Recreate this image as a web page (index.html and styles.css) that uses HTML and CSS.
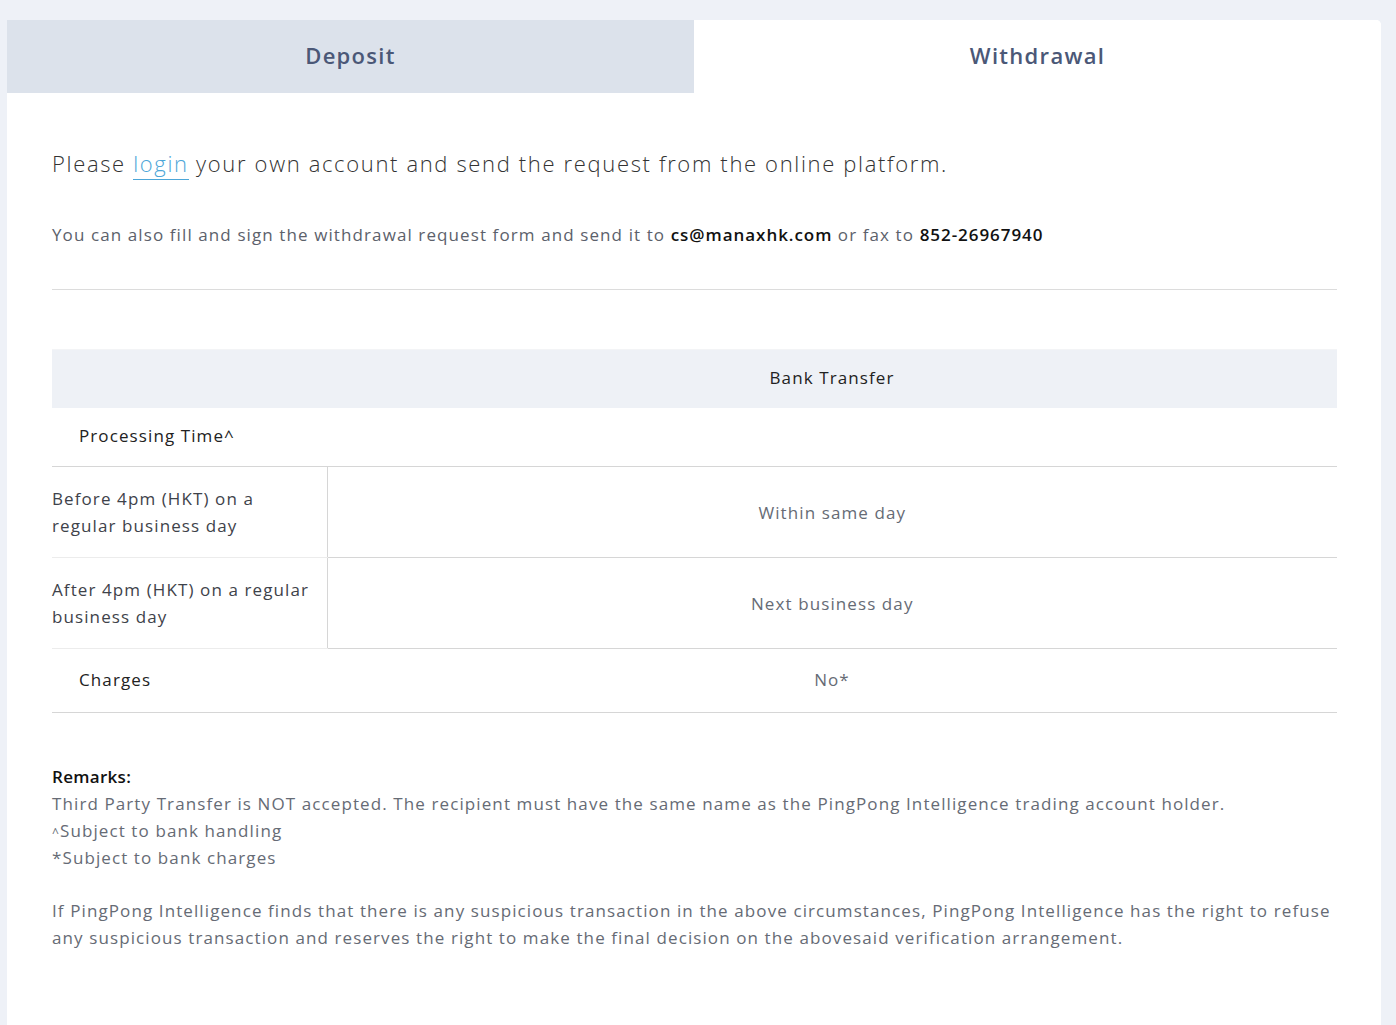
FILE: index.html
```html
<!DOCTYPE html>
<html lang="en">
<head>
    <meta charset="UTF-8">
    <meta name="viewport" content="width=device-width, initial-scale=1.0">
    <title>Withdrawal</title>
    <link rel="stylesheet" href="styles.css">
</head>
<body>

    <div class="panel">
        <div class="tabs">
            <div class="tab">Deposit</div>
            <div class="tab active">Withdrawal</div>
        </div>

        <div class="content">
            <h2 class="lead">Please <a href="#">login</a> your own account and send the request from the online platform.</h2>
            <p class="note">You can also fill and sign the withdrawal request form and send it to <b>cs@manaxhk.com</b> or fax to <b>852-26967940</b></p>

            <hr class="divider">

            <table class="methods">
                <thead>
                    <tr>
                        <th class="blank"></th>
                        <th>Bank Transfer</th>
                    </tr>
                </thead>
                <tbody>
                    <tr class="group">
                        <td class="label" colspan="2">Processing Time^</td>
                    </tr>
                    <tr class="sub">
                        <td class="when">Before 4pm (HKT) on a regular business day</td>
                        <td class="value">Within same day</td>
                    </tr>
                    <tr class="sub">
                        <td class="when">After 4pm (HKT) on a regular business day</td>
                        <td class="value">Next business day</td>
                    </tr>
                    <tr class="group charges">
                        <td class="label">Charges</td>
                        <td class="value">No*</td>
                    </tr>
                </tbody>
            </table>

            <div class="remarks">
                <h4>Remarks:</h4>
                <p>Third Party Transfer is NOT accepted. The recipient must have the same name as the PingPong Intelligence trading account holder.</p>
                <p><span class="caret">^</span>Subject to bank handling</p>
                <p>*Subject to bank charges</p>
            </div>

            <p class="disclaimer">If PingPong Intelligence finds that there is any suspicious transaction in the above circumstances, PingPong Intelligence has the right to refuse any suspicious transaction and reserves the right to make the final decision on the abovesaid verification arrangement.</p>
        </div>
    </div>

</body>
</html>
```

FILE: styles.css
```css
body {
    font-family: 'Open Sans', sans-serif;
    background-color: #eef1f7;
    color: #333;
    margin: 0;
    padding: 20px 15px 0 7px;
    letter-spacing: 1.1px;
}

.panel {
    background: white;
    border-radius: 0 5px 0 0;
    min-height: 1010px;
}

.tabs {
    display: grid;
    grid-template-columns: 687px 1fr;
    height: 73px;
}

.tab {
    display: flex;
    align-items: center;
    justify-content: center;
    padding-bottom: 4px;
    font-size: 22px;
    font-weight: 600;
    letter-spacing: 1.3px;
    color: #4b5877;
    background-color: #dce2eb;
}

.tab.active {
    background-color: white;
    border-radius: 0 5px 0 0;
}

.content {
    padding: 55px 44px 40px 45px;
}

.lead {
    margin: 0;
    font-size: 22px;
    font-weight: 300;
    line-height: 30px;
    letter-spacing: 1.65px;
    color: #333;
}

.lead a {
    color: #4ca6d8;
    text-decoration: none;
    border-bottom: 1px solid #4ca6d8;
    padding-bottom: 1px;
}

.note {
    margin: 43px 0 0;
    font-size: 17px;
    line-height: 27px;
    color: #5c616b;
}

.note b {
    color: #111;
    font-weight: 600;
    letter-spacing: 0.95px;
}

.divider {
    border: 0;
    border-top: 1px solid #dcdcdc;
    margin: 41px 0 0;
}

table.methods {
    width: 100%;
    border-collapse: collapse;
    margin-top: 59px;
    font-size: 17px;
}

.methods th {
    height: 54px;
    padding: 0 0 4px;
    background-color: #eef1f6;
    font-weight: 500;
    color: #222;
    text-align: center;
    border-top: 1px solid #f3f4f6;
}

.methods th.blank {
    width: 275px;
}

.methods td {
    padding: 0;
    border-bottom: 1px solid #d6d6d6;
}

.methods tr.group td {
    height: 55px;
}

.methods td.label {
    padding: 0 0 3px 27px;
    font-weight: 500;
    color: #222;
}

.methods tr.charges td {
    height: 61px;
    padding-bottom: 2px;
}

.methods tr.sub td {
    height: 90px;
}

.methods td.when {
    padding-right: 12px;
    line-height: 27px;
    color: #3e424a;
    border-right: 1px solid #d6d6d6;
    border-bottom-color: #ececec;
}

.methods tr.sub + tr.group td {
    border-bottom-color: #d6d6d6;
}

.methods td.value {
    text-align: center;
    color: #666b75;
}

.remarks {
    margin-top: 50px;
    font-size: 17px;
    line-height: 27px;
    color: #666b75;
}

.remarks h4 {
    margin: 0;
    font-size: 17px;
    font-weight: 600;
    letter-spacing: 0.3px;
    color: #111;
}

.remarks p {
    margin: 0;
}

.remarks .caret {
    font-size: 12px;
    line-height: 1;
}

.disclaimer {
    margin: 26px 0 0;
    font-size: 17px;
    line-height: 27px;
    color: #666b75;
}
```
